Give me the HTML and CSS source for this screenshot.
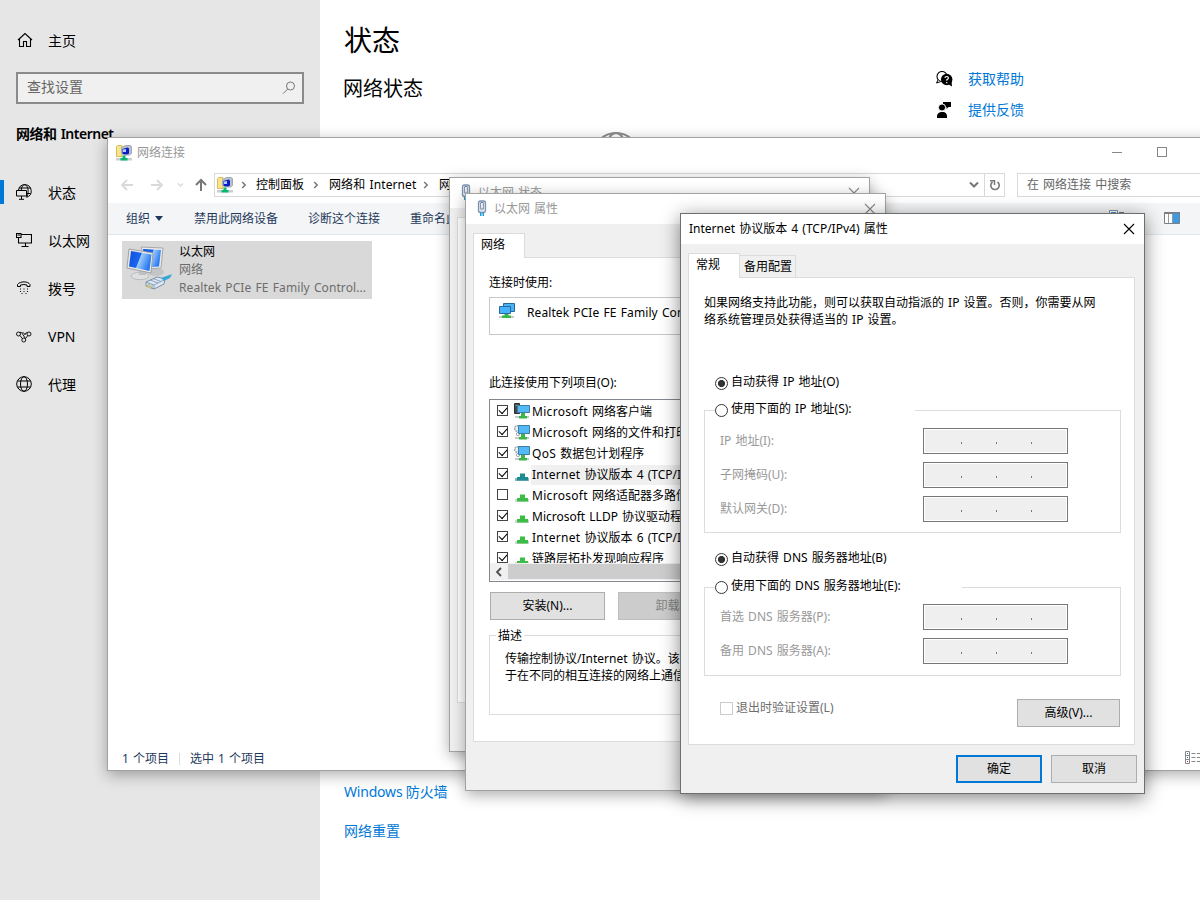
FILE: index.html
```html
<!DOCTYPE html>
<html lang="zh-CN">
<head>
<meta charset="utf-8">
<title>网络连接</title>
<link rel="stylesheet" href="styles.css">
</head>
<body>
<svg class="defs" width="0" height="0">
  <defs>
    <linearGradient id="screen" x1="0" y1="0" x2="1" y2="0.35"><stop offset="0" stop-color="#0a50dc"/><stop offset=".52" stop-color="#1c66ee"/><stop offset=".56" stop-color="#9ccbfb"/><stop offset="1" stop-color="#2d7bf0"/></linearGradient>
    <symbol id="folder-net" viewBox="0 0 16 16">
      <path d="M0.500 1.500l1-1h4.500v11H.500z" fill="#f7e58b" stroke="#d8bd5a"/>
      <path d="M5.500 2.500l4-2h4.500l1.500 1v7l-2 1.500H8l-2.500-2z" fill="#b9c0ca" stroke="#a3aab6"/>
      <path d="M6.500 4l5-1.500 1.500 1v5l-2 1-4.500-.5z" fill="#0a1fc4"/><path d="M7 4.500l3-.5v3H7z" fill="#b5ceff"/>
      <path d="M0 13h16v2.500H0z" fill="#c9cfd1"/><path d="M6.500 10.500h3v2.500h2v2.500h-7V13h2z" fill="#08b870"/>
    </symbol>
    <symbol id="plug" viewBox="0 0 10 18">
      <path d="M1.500 3Q1.500 1 3.500 1h3q2 0 2 2v7.500q0 2-1.500 2H3q-1.500 0-1.500-2z" fill="#dce6f2" stroke="#8093ad" stroke-width="1.300"/>
      <path d="M3.700 2.500h2.600v6.500H3.700z" fill="#fff" stroke="#7588a4"/><path d="M3 12.500h1.500V16H3zM5.500 12.500H7V16H5.500z" fill="#1b9cd8"/>
    </symbol>
    <symbol id="monitors" viewBox="0 0 16 16">
      <path d="M4.500.5h11v8h-11z" fill="#46b2f0" stroke="#27699f"/><path d="M.5 3.500h11v7H.5z" fill="#46b2ff" stroke="#27699f"/>
      <path d="M0 13h15v2H0z" fill="#c8ced0"/><path d="M5.500 11h4v1.500h2.500v2.500H3v-2.500h2.500z" fill="#37b546"/>
    </symbol>
    <symbol id="client" viewBox="0 0 16 16">
      <path d="M.5.500h5v10h-5z" fill="#454b4e" stroke="#2c3032"/><path d="M1.500 2.500h3" stroke="#5dc04d"/><path d="M3.500 2.500h12v7h-12z" fill="#54b9f7" stroke="#3e7da8"/>
      <path d="M1 13h14v2H1z" fill="#c5cacb"/><path d="M7 10h4v3h2v2.500H5V13h2z" fill="#3cb54a"/>
    </symbol>
    <symbol id="service" viewBox="0 0 16 16">
      <circle cx="3.500" cy="4.500" r="2.800" fill="#eef2f4" stroke="#98a7b1" stroke-width="1.500" stroke-dasharray="1.700 .7"/><circle cx="4" cy="10" r="1.600" fill="#fff" stroke="#98a7b1"/>
      <path d="M4.500 1.500h11v8h-11z" fill="#54b9f7" stroke="#3e7da8"/><path d="M1 13h14v2H1z" fill="#c5cacb"/><path d="M7 10h4v3h2v2.500H5V13h2z" fill="#3cb54a"/>
    </symbol>
    <symbol id="proto" viewBox="0 0 16 16"><path d="M1 12h14v3H1z" fill="#d3d6d7"/><path d="M6 7.500h5v3.500h3v3.500H3V11h3z" fill="#3cbd46"/></symbol>
    <symbol id="proto-sel" viewBox="0 0 16 16"><path d="M1 12h14v3H1z" fill="#94b3c6"/><path d="M6 7.500h5v3.500h3v3.500H3V11h3z" fill="#1d8d92"/></symbol>
    <symbol id="globe" viewBox="0 0 16 16"><g fill="none" stroke="currentColor"><circle cx="8" cy="8" r="7.300"/><ellipse cx="8" cy="8" rx="3.500" ry="7.300"/><path d="M1.500 5h13M1.500 11h13"/></g></symbol>
    <symbol id="close" viewBox="0 0 12 12"><path d="M1 1l10 10M11 1L1 11" fill="none" stroke="currentColor" stroke-width="1.100"/></symbol>
    <symbol id="chev" viewBox="0 0 6 8"><path d="M1.200 1l3 3-3 3" fill="none" stroke="currentColor" stroke-width="1.500"/></symbol>
  </defs>
</svg>
<div class="desktop">
  <aside class="sidebar">
    <div class="nav home"><svg class="ic" viewBox="0 0 16 16"><path d="M1 8l7-6.500L15 8M2.500 7v7.500h4V9.500h3v5h4V7" fill="none" stroke="#000" stroke-width="1.100"/></svg><span>主页</span></div>
    <div class="find"><span>查找设置</span><svg width="14" height="14" viewBox="0 0 14 14"><circle cx="8.500" cy="5" r="4" fill="none" stroke="#777"/><path d="M5.700 8L1 12.700" stroke="#777"/></svg></div>
    <h3>网络和 Internet</h3>
    <nav>
      <div class="nav on"><svg class="ic" viewBox="0 0 16 16"><g fill="none" stroke="#000"><path d="M2.500 6A6.400 6.400 0 1 1 10.500 13.300M5.200 6C5.600 2.500 7 .7 8.700.7s3.400 2.600 3.400 6.300-.6 4.500-1.600 6.200M3 4h11.500M10.500 9.500h4"/><path d="M.5 6.500h10v5.500H.5zM5.500 12v3M3 15.300h5"/></g></svg><span>状态</span></div>
      <div class="nav"><svg class="ic" viewBox="0 0 16 16"><path d="M5 2.500h10.500v8.500H4.500M9.500 11v3M5.500 14.500h7M.5 1.500h4.500v4H.5zM2.500 5.500v5.500h2.500M1.500 3h2.500" fill="none" stroke="#000" stroke-width="1.100"/></svg><span>以太网</span></div>
      <div class="nav"><svg class="ic" viewBox="0 0 16 16"><path d="M1.500 6.500v-2C4 1 12 1 14 4.500v2h-3V5Q8 4 4.500 5v1.500z" fill="none" stroke="#000"/><path d="M4 9h1M7.500 9h1M11 9h1M4 11.500h1M7.500 11.500h1M11 11.500h1M5.500 13.500h1M9.500 13.500h1" stroke="#000"/></svg><span>拨号</span></div>
      <div class="nav"><svg class="ic" viewBox="0 0 16 16"><g fill="none" stroke="#000" stroke-width=".9"><circle cx="2.500" cy="6" r="2"/><circle cx="13" cy="6" r="2"/><circle cx="7.800" cy="12" r="2"/><path d="M4 4.300Q6 4 6.500 6L9.500 10.500M4 7.500L6.500 10.700M11.500 4.500Q9.500 4.500 8.500 6.500M11.800 7.600L9.500 10.500M6.500 4l3 3"/></g></svg><span>VPN</span></div>
      <div class="nav"><svg class="ic"><use href="#globe"/></svg><span>代理</span></div>
    </nav>
  </aside>
  <main class="settings">
    <div class="intro">
      <h1>状态</h1>
      <h2>网络状态</h2>
      <svg class="bigglobe" viewBox="0 0 48 48"><g fill="none" stroke="currentColor" stroke-width="2"><circle cx="24" cy="24" r="23"/><ellipse cx="24" cy="24" rx="11" ry="23"/><path d="M3 15h42M3 33h42"/></g></svg>
    </div>
    <div class="more"><a class="fw">Windows 防火墙</a><a>网络重置</a></div>
  </main>
  <div class="help">
    <a><svg width="17" height="16" viewBox="0 0 17 16"><circle cx="6" cy="5.500" r="5" fill="#fff" stroke="#000" stroke-width="1.100"/><path d="M2 9L.5 12l4-1.300" fill="#fff" stroke="#000"/><circle cx="10.700" cy="8.500" r="5.700"/><path d="M12 13l4 2.500-.5-5z"/><path d="M9 7Q9 5.500 10.700 5.500T12.400 7Q12.400 8 10.800 8.700v1M10.800 11v1.200" fill="none" stroke="#fff" stroke-width="1.200"/></svg><span>获取帮助</span></a>
    <a><svg width="17" height="18" viewBox="0 0 17 18"><path d="M7 1h8v5h-2.500L10.500 8V6H7z"/><circle cx="6" cy="6.500" r="3.600" stroke="#fff"/><path d="M1 17v-2.500q1-3.500 4.500-3.500h2Q10 11 11 14.500V17z"/></svg><span>提供反馈</span></a>
  </div>

  <section class="win explorer">
    <header class="titlebar"><svg class="ic"><use href="#folder-net"/></svg><span class="t">网络连接</span><i class="min"></i><i class="max"></i></header>
    <div class="addr">
      <svg class="arrows" viewBox="0 0 90 16"><g fill="none" stroke="#d9d9d9" stroke-width="1.800"><path d="M14 8H3M8 3L3 8l5 5M32 8h11M38 3l5 5-5 5"/><path d="M59 6.500l2.500 2.500L64 6.500" stroke-width="1.300"/><path d="M82 14V3M77 8l5-5 5 5" stroke="#777" stroke-width="2"/></g></svg>
      <div class="path"><svg class="ic"><use href="#folder-net"/></svg><svg class="chev c1"><use href="#chev"/></svg><span>控制面板</span><svg class="chev"><use href="#chev"/></svg><span class="seg">网络和 Internet</span><svg class="chev"><use href="#chev"/></svg><span>网络连接</span>
        <svg class="drop" viewBox="0 0 10 8"><path d="M1 1.500l4 4 4-4" fill="none" stroke="#777" stroke-width="2"/></svg>
        <div class="refresh"><svg width="12" height="13" viewBox="0 0 12 13"><path d="M8.500 3A4.200 4.200 0 1 1 3.500 3" fill="none" stroke="#777" stroke-width="1.600"/><path d="M1 1.700h4.500V6" fill="none" stroke="#777" stroke-width="1.500"/></svg></div>
      </div>
      <div class="search">在 网络连接 中搜索</div>
    </div>
    <div class="cmds"><span>组织</span><i class="tri"></i><span class="g31">禁用此网络设备</span><span class="g30">诊断这个连接</span><span class="g30">重命名此连接</span>
      <svg class="view" viewBox="0 0 16 12"><path d="M.5.500h8v5h-8z" fill="#fff" stroke="#8b8f94"/><path d="M2 2h5v2H2z" fill="#3d8ee6"/><path d="M10 2.500h5" stroke="#777"/></svg>
      <svg class="pane" viewBox="0 0 16 12"><path d="M.5.500h15v11H.5z" fill="#fff" stroke="#7a7f85"/><path d="M0 0h16v2H0z" fill="#7a7f85"/><path d="M4.500 2v9M8.500 2v9" stroke="#999"/><path d="M9 1.500h6v9.500H9z" fill="#3d9be6"/></svg>
    </div>
    <div class="files">
      <div class="item">
        <svg width="48" height="50" viewBox="0 0 48 50">
          <ellipse cx="30" cy="28" rx="8" ry="4" fill="#c3c5c7"/><path d="M15 3l22 1-2 20-14 1z" fill="#e9e9e9" stroke="#a8a8a8"/><path d="M17 5l18 1-2 16.500-12 1z" fill="url(#screen)"/>
          <ellipse cx="14" cy="32" rx="9" ry="3.700" fill="#dedfe0" stroke="#a9adb0" stroke-width=".7"/><path d="M13 25h7v6h-7z" fill="#bfc2c5"/><path d="M3 5l24 4-2 20-24-5z" fill="#ececec" stroke="#9f9f9f"/><path d="M5 7l20.500 3.500-2 16.500L3 22.500z" fill="url(#screen)"/>
          <path d="M20 38l11-5 8 2-1 5-10 5-8-3z" fill="#dfe8f2" stroke="#7890ae"/><path d="M20 38l8 3v4M28 41l10-5M24 36l8 3M27 34.500l8 3M23 39v4M26 40v4" fill="none" stroke="#7890ae" stroke-width=".8"/><path d="M35 34l11-4-2 4-6 3z" fill="#3ba7d7"/><path d="M21 40l4 2v3l-4-2z" fill="#c7c574"/>
        </svg>
        <div class="meta"><b>以太网</b><span>网络</span><span class="dev">Realtek PCIe FE Family Control...</span></div>
      </div>
    </div>
    <footer class="status"><span>1 个项目</span><i></i><span>选中 1 个项目</span><svg width="18" height="14" viewBox="0 0 18 14"><path d="M.5.500h4v12h-4zM.5 4.500h4M.5 8.500h4M6.500 2.500h4M6.500 6.500h4M6.500 10.500h4M12 2.500h4M12 6.500h4M12 10.500h4" fill="#fff" stroke="#888"/><path d="M2 2h1v1H2zM2 6h1v1H2z" fill="#36c"/><path d="M2 10h1v1H2z" fill="#c33"/></svg></footer>
  </section>

  <section class="win dlg state">
    <header class="titlebar"><svg class="plug"><use href="#plug"/></svg><span class="t">以太网 状态</span><svg class="x"><use href="#close"/></svg></header>
    <div class="sheet"></div>
  </section>

  <section class="win dlg props">
    <header class="titlebar"><svg class="plug"><use href="#plug"/></svg><span class="t">以太网 属性</span><svg class="x"><use href="#close"/></svg></header>
    <div class="tabs"><div class="tab act">网络</div></div>
    <div class="sheet">
      <div class="lbl">连接时使用:</div>
      <div class="adapter"><svg class="ic"><use href="#monitors"/></svg><span class="lat">Realtek PCIe FE Family Controller</span></div>
      <div class="lbl">此连接使用下列项目(O):</div>
      <div class="list">
        <div class="rows">
          <div class="row"><i class="cb ck"></i><svg class="ic"><use href="#client"/></svg><span><em>Microsoft</em> 网络客户端</span></div>
          <div class="row"><i class="cb ck"></i><svg class="ic"><use href="#service"/></svg><span><em>Microsoft</em> 网络的文件和打印机共享</span></div>
          <div class="row"><i class="cb ck"></i><svg class="ic"><use href="#service"/></svg><span><em>QoS</em> 数据包计划程序</span></div>
          <div class="row"><i class="cb ck"></i><svg class="ic"><use href="#proto-sel"/></svg><span class="sel"><em>Internet</em> 协议版本 4 (TCP/IPv4)</span></div>
          <div class="row"><i class="cb"></i><svg class="ic"><use href="#proto"/></svg><span><em>Microsoft</em> 网络适配器多路传送器协议</span></div>
          <div class="row"><i class="cb ck"></i><svg class="ic"><use href="#proto"/></svg><span>Microsoft LLDP 协议驱动程序</span></div>
          <div class="row"><i class="cb ck"></i><svg class="ic"><use href="#proto"/></svg><span><em>Internet</em> 协议版本 6 (TCP/IPv6)</span></div>
          <div class="row"><i class="cb ck"></i><svg class="ic"><use href="#proto"/></svg><span>链路层拓扑发现响应程序</span></div>
        </div>
        <div class="hbar"><svg width="8" height="10" viewBox="0 0 8 10"><path d="M6 1L2 5l4 4" fill="none" stroke="#505050" stroke-width="1.800"/></svg><i></i></div>
      </div>
      <div class="btns"><div class="btn">安装(N)...</div><div class="btn off">卸载(U)</div></div>
      <fieldset class="desc"><legend>描述</legend><p>传输控制协议/Internet 协议。该协议<br>于在不同的相互连接的网络上通信</p></fieldset>
    </div>
  </section>

  <section class="win dlg ipv4">
    <header class="titlebar"><span class="t">Internet 协议版本 4 (TCP/IPv4) 属性</span><svg class="x"><use href="#close"/></svg></header>
    <div class="tabs"><div class="tab act">常规</div><div class="tab">备用配置</div></div>
    <div class="sheet">
      <p class="hint">如果网络支持此功能，则可以获取自动指派的 IP 设置。否则，你需要从网<br>络系统管理员处获得适当的 IP 设置。</p>
      <div class="radio auto"><i class="rd on"></i><span>自动获得 IP 地址(O)</span></div>
      <div class="group ip">
        <div class="radio cap"><i class="rd"></i><span>使用下面的 IP 地址(S):</span></div>
        <div class="field"><label>IP 地址(I):</label><div class="box"><i></i><i></i><i></i></div></div>
        <div class="field"><label>子网掩码(U):</label><div class="box"><i></i><i></i><i></i></div></div>
        <div class="field"><label>默认网关(D):</label><div class="box"><i></i><i></i><i></i></div></div>
      </div>
      <div class="radio auto dnsauto"><i class="rd on"></i><span>自动获得 DNS 服务器地址(B)</span></div>
      <div class="group dns">
        <div class="radio cap"><i class="rd"></i><span>使用下面的 DNS 服务器地址(E):</span></div>
        <div class="field"><label>首选 DNS 服务器(P):</label><div class="box"><i></i><i></i><i></i></div></div>
        <div class="field"><label>备用 DNS 服务器(A):</label><div class="box"><i></i><i></i><i></i></div></div>
      </div>
      <div class="foot"><div class="verify"><i></i><span>退出时验证设置(L)</span></div><div class="btn adv">高级(V)...</div></div>
    </div>
    <div class="actions"><div class="btn ok">确定</div><div class="btn">取消</div></div>
  </section>
</div>
</body>
</html>
```
FILE: styles.css
```css
* { box-sizing: border-box; }
body { margin: 0; font: 12px/18px "Noto Sans", "Noto Sans CJK SC", sans-serif; color: #000; }
svg { display: block; flex: none; }
.defs { position: absolute; }
h1, h2, h3, p { margin: 0; font-weight: 400; }
em { font-style: normal; letter-spacing: .3px; }
.desktop { position: relative; width: 1200px; height: 900px; overflow: hidden; background: #fff; display: flex; }
.ic { width: 16px; height: 16px; }

/* settings app */
.sidebar { width: 320px; background: #e6e6e6; padding-top: 17px; font-size: 14px; }
.nav { height: 48px; display: flex; align-items: center; padding-left: 16px; gap: 16px; }
.nav .ic { margin-top: -2px; }
.nav.home { padding-left: 17px; gap: 15px; }
.nav.on { background: linear-gradient(#0078d7, #0078d7) 0 11px / 4px 24px no-repeat; }
.find { margin: 7px 16px 0; height: 32px; border: 2px solid #8a8a8a; background: #f0f0f0; display: flex; justify-content: space-between; align-items: center; padding: 0 6px 3px 9px; color: #666; }
.find svg { margin-top: 3px; }
.sidebar h3 { font-size: 14px; font-weight: 600; margin: 20px 0 0 16px; height: 45px; line-height: 20px; letter-spacing: -.5px; word-spacing: 1px; }
.settings { flex: 1; display: flex; flex-direction: column; padding-left: 24px; }
.intro { height: 782px; }
h1 { font-size: 28px; line-height: 40px; margin-top: 20px; }
h2 { font-size: 20px; line-height: 30px; margin: 14px 0 0 -1px; }
.bigglobe { width: 48px; height: 48px; margin: 28px 0 0 248px; color: #8b8b8b; }
a { color: #0078d7; }
.more { display: flex; flex-direction: column; gap: 19px; font-size: 14px; line-height: 20px; }
.more .fw { letter-spacing: -.2px; }
.help { width: 264px; padding-top: 69px; display: flex; flex-direction: column; gap: 11px; font-size: 14px; line-height: 20px; }
.help a { display: flex; gap: 15px; align-items: center; height: 20px; }

/* windows */
.win { position: absolute; border: 1px solid #a2a2a2; background: #fff; box-shadow: 0 4px 14px rgba(0,0,0,.32); word-spacing: 1px; }
.titlebar { height: 30px; background: #fff; display: flex; align-items: center; color: #999; }
.explorer { left: 107px; top: 137px; width: 1141px; height: 634px; display: flex; flex-direction: column; }
.explorer .titlebar { padding-left: 8px; }
.explorer .titlebar .ic { margin-top: -1px; }
.explorer .titlebar .t { margin-left: 5px; width: 975px; }
.min { width: 10px; height: 1px; background: #888; margin-top: -1px; }
.max { width: 10px; height: 10px; border: 1px solid #888; margin: -2px 0 0 35px; }
.addr { height: 35px; display: flex; align-items: center; padding: 5px 0 6px 11px; }
.arrows { width: 90px; height: 16px; margin-right: 5px; }
.path { width: 791px; height: 24px; border: 1px solid #d9d9d9; display: flex; align-items: center; padding: 0 0 1px 2px; white-space: nowrap; }
.chev { width: 6px; height: 8px; margin: 0 10px 0 9px; color: #777; }
.chev.c1 { margin: 0 9px 0 8px; }
.seg { width: 85px; letter-spacing: .1px; }
.drop { width: 10px; height: 8px; margin: 1px 5px 0 auto; }
.refresh { width: 20px; height: 22px; border-left: 1px solid #d9d9d9; display: flex; align-items: center; justify-content: center; margin-top: 1px; }
.search { width: 210px; height: 24px; border: 1px solid #d9d9d9; margin-left: 12px; padding: 2px 9px; color: #666; }
.cmds { height: 32px; background: #f4f5f7; border-bottom: 1px solid #e3e6e9; display: flex; align-items: center; padding-left: 18px; color: #1e395b; }
.tri { border: 4px solid transparent; border-top: 5px solid #1e395b; border-bottom: 0; margin-left: 5px; }
.g31 { margin-left: 31px; } .g30 { margin-left: 30px; }
.view { width: 16px; height: 12px; margin: -6px 0 0 627px; }
.pane { width: 16px; height: 12px; margin: -2px 0 0 39px; }
.files { flex: 1; padding: 6px 14px; }
.item { width: 250px; height: 58px; background: #d9d9d9; display: flex; padding: 2px 0 0 4px; }
.item svg { margin-top: 1px; }
.meta { margin-left: 5px; display: flex; flex-direction: column; color: #6d6d6d; white-space: nowrap; }
.meta b { font-weight: 400; color: #000; }
.dev, .lat { letter-spacing: .08px; }
.status { height: 24px; display: flex; align-items: center; padding: 1px 0 0 14px; color: #1e395b; }
.status i { width: 1px; height: 12px; margin: 0 10px; background: #ddd; }
.status svg { margin: -1px 0 0 920px; }

.dlg { background: #f0f0f0; }
.dlg .titlebar { padding: 0 9px 0 11px; }
.plug { width: 10px; height: 18px; margin-right: 7px; }
.x { width: 12px; height: 12px; margin: -1px 0 0 auto; color: #888; }
.sheet { background: #fff; border: 1px solid #dcdcdc; }
.tabs { display: flex; align-items: flex-end; padding-left: 7px; }
.tab { height: 22px; border: 1px solid #dcdcdc; border-left: 0; border-bottom: 0; padding: 2px 3px 0 4px; }
.tab.act { width: 52px; height: 25px; margin-bottom: -1px; position: relative; background: #fff; border-left: 1px solid #dcdcdc; padding: 2px 0 0 7px; }
.btn { height: 28px; border: 1px solid #adadad; background: #e1e1e1; text-align: center; line-height: 26px; width: 86px; }
.btn.off { background: #ccc; border-color: #bfbfbf; color: #838383; }
.state { left: 449px; top: 177px; width: 421px; height: 575px; }
.state .sheet { margin: 9px 7px; height: 486px; }

.props { left: 465px; top: 193px; width: 421px; height: 598px; }
.props .tabs { margin-top: 9px; }
.props .sheet { margin: 0 7px; height: 485px; padding: 16px 15px; white-space: nowrap; }
.adapter { height: 38px; border: 1px solid #c8c8c8; margin: 5px 0 39px; display: flex; padding: 6px 9px; gap: 12px; }
.adapter .ic { margin-top: -1px; }
.list { margin-top: 7px; height: 183px; border: 1px solid #828790; display: flex; flex-direction: column; }
.rows { height: 163px; overflow: hidden; padding-top: 1px; }
.row { height: 21px; display: flex; align-items: center; padding-left: 7px; }
.row .ic { margin: -1px 1px 0 6px; }
.row span { height: 20px; line-height: 20px; padding-left: 1px; }
.row .sel { background: #f0f0f0; width: 340px; }
.cb { width: 11px; height: 11px; border: 1px solid #444; position: relative; flex: none; margin-top: -2px; }
.cb.ck::after { content: ""; position: absolute; left: 1px; top: 1px; width: 7px; height: 4px; border: solid #000; border-width: 0 0 1.500px 1.500px; transform: rotate(-48deg); }
.hbar { height: 17px; background: #f0f0f0; display: flex; align-items: center; padding-left: 5px; }
.hbar i { margin-left: 5px; width: 250px; height: 15px; background: #cdcdcd; }
.btns { display: flex; gap: 13px; margin: 10px 0 0 1px; }
.btns .btn { width: 115px; }
.desc { margin: 6px 0 0; height: 89px; border: 1px solid #dcdcdc; padding: 6px 15px; min-width: 0; line-height: 17px; }
.desc legend { padding: 1px 2px 0; margin-left: -9px; line-height: 18px; height: 18px; }

.ipv4 { left: 680px; top: 213px; width: 465px; height: 581px; border-color: #6b6f6e; box-shadow: 0 4px 18px rgba(0,0,0,.48); }
.ipv4 .titlebar { color: #000; padding-left: 8px; }
.ipv4 .x { color: #000; }
.ipv4 .tabs { margin-top: 9px; }
.ipv4 .sheet { margin: 0 9px 0 7px; height: 468px; padding: 16px 13px 0 15px; }
.hint { line-height: 17px; white-space: nowrap; height: 80px; }
.radio { display: flex; align-items: center; gap: 3px; height: 18px; }
.radio.auto { padding-left: 11px; }
.radio span { margin-top: -3px; }
.rd { width: 13px; height: 13px; border: 1px solid #333; border-radius: 50%; background: #fff; flex: none; }
.rd.on { background: radial-gradient(#333 0 3.200px, #fff 3.900px); }
.group { border: 1px solid #dcdcdc; display: flex; flex-direction: column; gap: 8px; width: 417px; }
.group .cap { height: 18px; margin: -10px 0 1px 10px; background: #fff; }
.ip { height: 123px; margin-top: 18px; }
.ip .cap { width: 200px; }
.dns { height: 89px; margin-top: 19px; }
.dns .cap { width: 247px; margin-bottom: 0; }
.dnsauto { margin-top: 17px; }
.field { height: 26px; display: flex; justify-content: space-between; align-items: center; padding: 0 52px 0 15px; color: #999; }
.box { width: 145px; height: 26px; border: 1px solid #777; background: #efefef; box-shadow: inset 0 0 0 1px #fff; display: flex; gap: 34px; padding: 13px 0 0 37px; }
.box i { width: 1px; height: 2px; background: #777; }
.foot { display: flex; justify-content: space-between; margin-top: 23px; padding: 0 1px 0 16px; }
.verify { display: flex; gap: 3px; color: #6d6d6d; height: 18px; align-items: center; }
.verify i { width: 13px; height: 13px; border: 1px solid #ccc; }
.btn.adv { width: 103px; }
.actions { display: flex; gap: 9px; justify-content: flex-end; padding: 10px 7px; }
.ok { border: 2px solid #0078d7; line-height: 24px; }
```
